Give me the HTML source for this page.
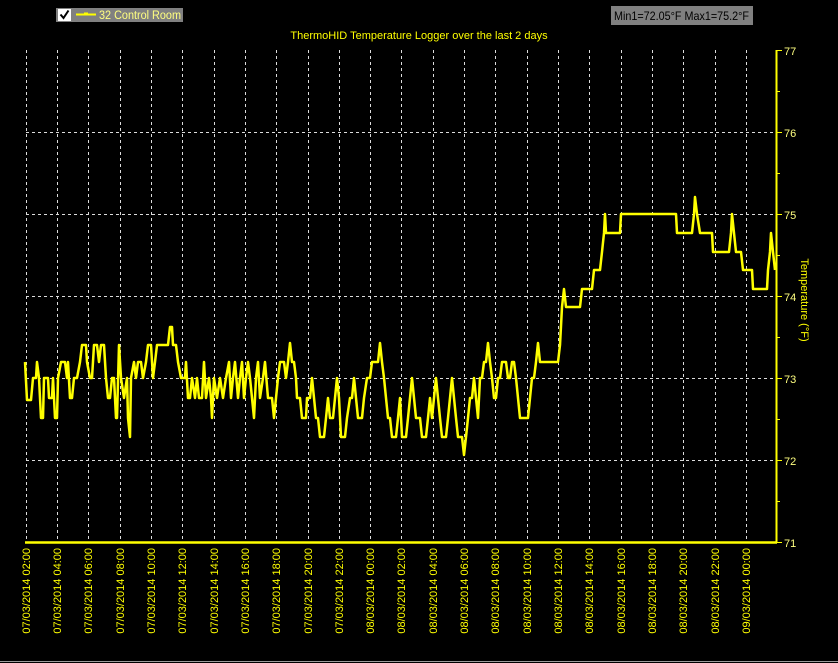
<!DOCTYPE html>
<html><head><meta charset="utf-8"><style>
html,body{margin:0;padding:0;background:#000;width:838px;height:663px;overflow:hidden}
svg{display:block;font-family:"Liberation Sans",sans-serif}
</style></head><body>
<svg width="838" height="663" viewBox="0 0 838 663" xmlns="http://www.w3.org/2000/svg">
<rect width="838" height="663" fill="#000"/>
<line x1="0" y1="661.5" x2="838" y2="661.5" stroke="#9a9a9a" stroke-width="1"/>
<!-- legend -->
<rect x="56" y="8" width="127" height="14" fill="#808080"/>
<rect x="58" y="9" width="13" height="12" fill="#fff"/>
<path d="M60.5 14.5 L63.5 18 L68.5 10.5" stroke="#000" stroke-width="2" fill="none"/>
<line x1="76" y1="14.5" x2="96" y2="14.5" stroke="#ffff00" stroke-width="2"/>
<line x1="84" y1="13" x2="88" y2="13" stroke="#ffff00" stroke-width="1"/>
<text x="99" y="19" font-size="11.5" fill="#ffff80" textLength="82" lengthAdjust="spacingAndGlyphs">32 Control Room</text>
<rect x="611" y="6" width="142" height="19" fill="#808080"/>
<text x="614" y="20" font-size="12" fill="#000" textLength="135" lengthAdjust="spacingAndGlyphs">Min1=72.05°F Max1=75.2°F</text>
<text x="419" y="39" font-size="11" fill="#ffff00" text-anchor="middle">ThermoHID Temperature Logger over the last 2 days</text>
<!-- grid -->
<g stroke="#dcdcdc" stroke-width="1" stroke-dasharray="3,3">
<line x1="26" y1="132.5" x2="776" y2="132.5"/>
<line x1="26" y1="214.5" x2="776" y2="214.5"/>
<line x1="26" y1="296.5" x2="776" y2="296.5"/>
<line x1="26" y1="378.5" x2="776" y2="378.5"/>
<line x1="26" y1="460.5" x2="776" y2="460.5"/>
<line x1="26.5" y1="50" x2="26.5" y2="542"/><line x1="57.5" y1="50" x2="57.5" y2="542"/><line x1="88.5" y1="50" x2="88.5" y2="542"/><line x1="120.5" y1="50" x2="120.5" y2="542"/><line x1="151.5" y1="50" x2="151.5" y2="542"/><line x1="182.5" y1="50" x2="182.5" y2="542"/><line x1="214.5" y1="50" x2="214.5" y2="542"/><line x1="245.5" y1="50" x2="245.5" y2="542"/><line x1="276.5" y1="50" x2="276.5" y2="542"/><line x1="308.5" y1="50" x2="308.5" y2="542"/><line x1="339.5" y1="50" x2="339.5" y2="542"/><line x1="370.5" y1="50" x2="370.5" y2="542"/><line x1="401.5" y1="50" x2="401.5" y2="542"/><line x1="433.5" y1="50" x2="433.5" y2="542"/><line x1="464.5" y1="50" x2="464.5" y2="542"/><line x1="495.5" y1="50" x2="495.5" y2="542"/><line x1="527.5" y1="50" x2="527.5" y2="542"/><line x1="558.5" y1="50" x2="558.5" y2="542"/><line x1="589.5" y1="50" x2="589.5" y2="542"/><line x1="621.5" y1="50" x2="621.5" y2="542"/><line x1="652.5" y1="50" x2="652.5" y2="542"/><line x1="683.5" y1="50" x2="683.5" y2="542"/><line x1="715.5" y1="50" x2="715.5" y2="542"/><line x1="746.5" y1="50" x2="746.5" y2="542"/>
</g>
<!-- axes -->
<g stroke="#ffff00">
<line x1="776.5" y1="50" x2="776.5" y2="543" stroke-width="2"/>
<line x1="25" y1="542.5" x2="777" y2="542.5" stroke-width="2.5"/>
<path d="M777 50.5h5M777 132.5h5M777 214.5h5M777 296.5h5M777 378.5h5M777 460.5h5M777 542.5h5M777 91.5h3M777 173.5h3M777 255.5h3M777 337.5h3M777 419.5h3M777 501.5h3" stroke-width="1"/>
</g>
<g font-size="11" fill="#ffff80">
<text x="784" y="55">77</text><text x="784" y="137">76</text><text x="784" y="219">75</text><text x="784" y="301">74</text><text x="784" y="383">73</text><text x="784" y="465">72</text><text x="784" y="547">71</text>
</g>
<text transform="translate(801,300) rotate(90)" font-size="11" fill="#ffff00" text-anchor="middle">Temperature (°F)</text>
<!-- data -->
<polyline fill="none" stroke="#ffff00" stroke-width="2.5" stroke-linejoin="round" points="
25,362 27,400 31,400 33,378 36,378 37,362 39,378 41,418 43,418 44,378 48,378 49,398 52,398 53,378 55,418 57,418 58,378 61,362 65,362 67,378 68,362 70,398 72,398 74,378 77,378 80,362 82,345 86,345 87,362 90,378 92,378 94,345 97,345 99,362 101,345 104,345 106,378 108,398 110,398 112,378 114,378 116,418 117,418 119,345 121,378 124,398 127,378 128,418 130,437 131,378 134,362 136,378 138,362 141,362 143,378 146,362 148,345 151,345 153,378 155,362 157,345 165,345 168,345 170,327 172,327 173,345 176,345 178,362 181,378 185,378 186,362 188,398 190,398 192,378 195,398 197,378 199,398 202,398 204,362 206,398 209,378 211,398 212,418 214,378 217,398 220,378 223,398 226,378 229,362 231,398 233,378 235,362 238,398 240,378 242,362 244,398 246,378 248,362 250,378 252,398 254,418 256,378 258,362 260,398 263,378 265,362 268,398 272,398 274,418 276,398 278,378 280,362 284,362 286,378 288,362 290,343 292,362 294,362 296,378 297,398 300,398 302,418 306,418 307,398 310,398 312,378 314,398 316,418 318,418 320,437 324,437 326,418 328,398 330,418 333,418 335,398 337,378 339,398 341,437 345,437 347,418 350,398 352,398 354,378 356,398 358,418 362,418 364,398 367,378 370,378 372,362 375,362 378,362 380,343 382,362 384,378 386,398 388,418 390,418 392,437 396,437 398,418 400,398 402,437 406,437 408,418 410,398 412,378 414,398 416,418 420,418 422,437 426,437 428,418 430,398 432,418 434,398 436,378 438,398 440,418 442,437 446,437 448,418 450,398 452,378 454,398 456,418 458,437 462,437 464,455 466,437 468,418 470,398 472,398 474,378 476,398 478,418 480,378 482,378 484,362 486,362 488,343 490,362 492,378 494,398 496,398 498,378 500,378 502,362 504,362 506,362 508,378 510,378 512,362 514,362 516,378 518,398 520,418 528,418 530,398 532,378 534,378 536,362 538,343 540,362 558,362 560,345 562,307 564,289 566,307 580,307 582,289 592,289 594,270 600,270 602,252 604,233 605,214 606,233 620,233 621,214 676,214 677,233 692,233 694,214 695,197 697,214 700,233 712,233 713,252 729,252 731,233 732,214 734,233 736,252 741,252 743,270 752,270 753,289 767,289 768,270 770,252 771,233 773,252 775,270"/>
<!-- x labels -->
<g font-size="11" fill="#ffff00" text-anchor="end">
<text transform="translate(30,548) rotate(-90)">07/03/2014 02:00</text>
<text transform="translate(61,548) rotate(-90)">07/03/2014 04:00</text>
<text transform="translate(92,548) rotate(-90)">07/03/2014 06:00</text>
<text transform="translate(124,548) rotate(-90)">07/03/2014 08:00</text>
<text transform="translate(155,548) rotate(-90)">07/03/2014 10:00</text>
<text transform="translate(186,548) rotate(-90)">07/03/2014 12:00</text>
<text transform="translate(218,548) rotate(-90)">07/03/2014 14:00</text>
<text transform="translate(249,548) rotate(-90)">07/03/2014 16:00</text>
<text transform="translate(280,548) rotate(-90)">07/03/2014 18:00</text>
<text transform="translate(312,548) rotate(-90)">07/03/2014 20:00</text>
<text transform="translate(343,548) rotate(-90)">07/03/2014 22:00</text>
<text transform="translate(374,548) rotate(-90)">08/03/2014 00:00</text>
<text transform="translate(405,548) rotate(-90)">08/03/2014 02:00</text>
<text transform="translate(437,548) rotate(-90)">08/03/2014 04:00</text>
<text transform="translate(468,548) rotate(-90)">08/03/2014 06:00</text>
<text transform="translate(499,548) rotate(-90)">08/03/2014 08:00</text>
<text transform="translate(531,548) rotate(-90)">08/03/2014 10:00</text>
<text transform="translate(562,548) rotate(-90)">08/03/2014 12:00</text>
<text transform="translate(593,548) rotate(-90)">08/03/2014 14:00</text>
<text transform="translate(625,548) rotate(-90)">08/03/2014 16:00</text>
<text transform="translate(656,548) rotate(-90)">08/03/2014 18:00</text>
<text transform="translate(687,548) rotate(-90)">08/03/2014 20:00</text>
<text transform="translate(719,548) rotate(-90)">08/03/2014 22:00</text>
<text transform="translate(750,548) rotate(-90)">09/03/2014 00:00</text>
</g>
</svg>
</body></html>
